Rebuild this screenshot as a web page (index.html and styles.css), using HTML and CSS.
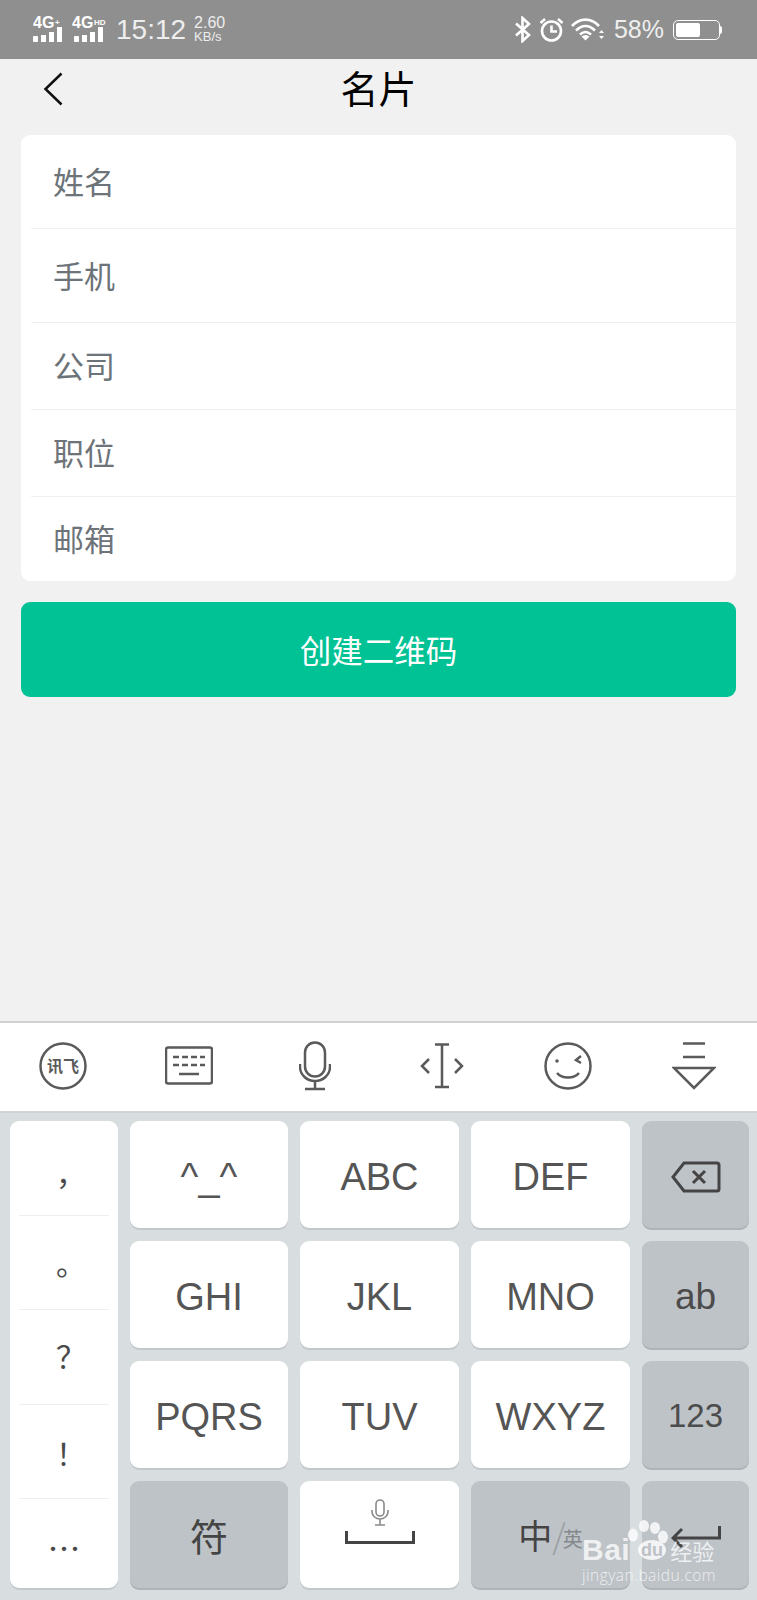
FILE: index.html
```html
<!DOCTYPE html>
<html>
  <head>
    <meta charset="utf-8">
    <title>名片</title>
    <link rel="stylesheet" href="styles.css">
  </head>
  <body>
    <div class="statusbar">
      <svg class="signal" width="34" height="36" viewBox="0 -4 34 36">
        <text x="0" y="12" class="net">4G</text>
        <text x="22" y="9" class="net-sup">+</text>
        <rect x="0" y="20" width="5" height="6" rx="1"/><rect x="8" y="19" width="5" height="7"/><rect x="16" y="16" width="5" height="10"/><rect x="24" y="11" width="5" height="15"/>
      </svg>
      <svg class="signal" width="38" height="36" viewBox="0 -4 38 36">
        <text x="0" y="12" class="net">4G</text>
        <text x="22" y="9" class="net-sup">HD</text>
        <rect x="2" y="20" width="5" height="6" rx="1"/><rect x="10" y="19" width="5" height="7"/><rect x="18" y="16" width="5" height="10"/><rect x="26" y="11" width="5" height="15"/>
      </svg>
      <div class="clock">15:12</div>
      <div class="speed"><div>2.60</div><div class="speed-unit">KB/s</div></div>
      <div class="status-right">
        <svg width="18" height="27" viewBox="0 0 18 27" class="status-line">
          <path d="M2 7.500 15 19 8.500 25V2L15 8 2 19.500"/>
        </svg>
        <svg width="25" height="25" viewBox="0 0 25 25" class="status-line">
          <circle cx="12.500" cy="14" r="9.500"/><path d="M12.500 8.500V14.500H18M1.500 6 6 2M23.500 6 19 2"/>
        </svg>
        <svg width="34" height="24" viewBox="0 0 34 24" class="status-line">
          <path d="M1 8C9-.5 20-.5 28 8M5 12.500C11 6.500 18 6.500 24 12.500M9 16.500C13 13 16 13 20 16.500"/>
          <path class="status-fill" d="M10.500 18.500C13 16.500 16 16.500 18.500 18.500L14.500 22.500ZM30.500 12 33 15H28ZM30.500 21 28 18H33Z"/>
        </svg>
        <div class="battery-text">58%</div>
        <div class="battery"><div class="battery-level" style="width: 58%"></div></div>
        <div class="battery-tip"></div>
      </div>
    </div>

    <div class="topbar">
      <div class="back">
        <svg width="20" height="34" viewBox="0 0 20 34"><path d="M18.500 1.500 2.500 17 18.500 32.500"/></svg>
      </div>
      <div class="title">名片</div>
      <div></div>
    </div>

    <div class="form">
      <div class="row row-tall">姓名</div>
      <div class="row row-tall">手机</div>
      <div class="row">公司</div>
      <div class="row">职位</div>
      <div class="row">邮箱</div>
    </div>
    <div class="create">创建二维码</div>

    <div class="keyboard">
      <div class="toolbar">
        <div class="tool">
          <svg width="50" height="50" viewBox="0 0 50 50">
            <circle cx="25" cy="25" r="22.500"/>
            <text x="25" y="31" class="tool-text">讯飞</text>
          </svg>
        </div>
        <div class="tool">
          <svg width="48" height="40" viewBox="0 0 48 40">
            <rect x="1" y="1.500" width="46" height="36" rx="2"/>
            <path class="dash" d="M8 11H40M8 19H40"/>
            <path d="M14 28H34"/>
          </svg>
        </div>
        <div class="tool">
          <svg width="32" height="50" viewBox="0 0 32 50">
            <rect x="6" y="1.500" width="20" height="34" rx="10"/>
            <path d="M1 23V26C1 34 8 40 16 40S31 34 31 26V23M16 40V48M6 48H26"/>
          </svg>
        </div>
        <div class="tool">
          <svg width="44" height="46" viewBox="0 0 44 46">
            <path d="M15 1.500H29M22 1.500V44M15 44H29M9 16 2 23 9 30M35 16 42 23 35 30"/>
          </svg>
        </div>
        <div class="tool">
          <svg width="50" height="50" viewBox="0 0 50 50">
            <circle cx="25" cy="25" r="22.500"/>
            <circle class="tool-fill" cx="14" cy="20" r="1.800"/>
            <path d="M38 15 33 19 38 22M14 32C19 38 31 38 36 32"/>
          </svg>
        </div>
        <div class="tool">
          <svg width="44" height="48" viewBox="0 0 44 48">
            <path d="M11 1.500H33M11 15H33M2 26H42L22 46Z"/>
          </svg>
        </div>
      </div>

      <div class="keys">
        <div class="punct">
          <div class="punct-item">，</div>
          <div class="punct-item">。</div>
          <div class="punct-item">？</div>
          <div class="punct-item">！</div>
          <div class="punct-item punct-last">…</div>
        </div>
        <div class="key">^_^</div>
        <div class="key">ABC</div>
        <div class="key">DEF</div>
        <div class="key key-dark">
          <svg width="50" height="32" viewBox="0 0 50 32" class="key-icon">
            <path d="M13 2H46C47.500 2 48 2.500 48 4V28C48 29.500 47.500 30 46 30H13L2 16ZM22 10 34 22M34 10 22 22"/>
          </svg>
        </div>
        <div class="key">GHI</div>
        <div class="key">JKL</div>
        <div class="key">MNO</div>
        <div class="key key-dark key-ab">ab</div>
        <div class="key">PQRS</div>
        <div class="key">TUV</div>
        <div class="key">WXYZ</div>
        <div class="key key-dark key-num">123</div>
        <div class="key key-dark key-cjk">符</div>
        <div class="key key-space">
          <svg width="20" height="27" viewBox="0 0 20 27" class="key-mic">
            <rect x="6" y="1" width="8" height="16" rx="4"/>
            <path d="M2 11V13C2 17 6 20 10 20S18 17 18 13V11M10 20V26M5 26H15"/>
          </svg>
          <svg width="70" height="14" viewBox="0 0 70 14" class="key-bar">
            <path d="M1.500 1V12.500H68.500V1"/>
          </svg>
        </div>
        <div class="key key-dark key-lang"><span class="lang-main">中</span><span class="lang-slash">/</span><span class="lang-sub">英</span></div>
        <div class="key key-dark">
          <svg width="50" height="24" viewBox="0 0 50 24" class="key-icon">
            <path d="M48.500 1V13H2M11 4 2 13 11 22"/>
          </svg>
        </div>
      </div>
    </div>

    <div class="watermark">
      <svg class="paw" width="42" height="40" viewBox="0 0 42 40">
        <ellipse cx="6" cy="15" rx="5" ry="6.500"/><ellipse cx="17" cy="6" rx="5" ry="6"/><ellipse cx="28" cy="8" rx="5" ry="6"/><ellipse cx="36" cy="17" rx="5" ry="6.500"/>
        <ellipse cx="25" cy="30" rx="14" ry="10"/>
        <text x="25" y="36" class="paw-du">du</text>
      </svg>
      <div class="wm-line"><span class="wm-brand">Bai</span><span class="wm-cn">经验</span></div>
      <div class="wm-url">jingyan.baidu.com</div>
    </div>
  </body>
</html>
```

FILE: styles.css
```css
html, body {
  margin: 0;
  padding: 0;
}
body {
  position: relative;
  width: 757px;
  height: 1600px;
  overflow: hidden;
  display: flex;
  flex-direction: column;
  background: #f1f1f1;
  font-family: "Noto Sans CJK SC", "Liberation Sans", sans-serif;
}

.statusbar {
  height: 59px;
  flex: none;
  display: flex;
  align-items: center;
  padding-left: 33px;
  background: #8f8f8f;
  color: #eee;
  font-family: "Liberation Sans", sans-serif;
}
.signal {
  margin-right: 5px;
  fill: #fff;
}
.net {
  font-size: 16px;
  font-weight: 700;
}
.net-sup {
  font-size: 8px;
  font-weight: 700;
}
.clock {
  margin-left: 1px;
  font-size: 28px;
}
.speed {
  margin-left: 8px;
  font-size: 16px;
  line-height: 14px;
}
.speed-unit {
  font-size: 13px;
}
.status-right {
  margin-left: auto;
  margin-right: 35px;
  display: flex;
  align-items: center;
}
.status-line {
  margin-right: 7px;
  fill: none;
  stroke: #fff;
  stroke-width: 2.600;
}
.status-fill {
  fill: #fff;
  stroke: none;
}
.battery-text {
  margin-left: 2px;
  margin-right: 9px;
  font-size: 25px;
}
.battery {
  width: 47px;
  height: 20px;
  box-sizing: border-box;
  padding: 2px;
  border: 1.500px solid #fff;
  border-radius: 5px;
}
.battery-level {
  height: 100%;
  background: #fff;
  border-radius: 2px;
}
.battery-tip {
  width: 2px;
  height: 8px;
  background: #fff;
  border-radius: 0 2px 2px 0;
}

.topbar {
  height: 76px;
  flex: none;
  display: grid;
  grid-template-columns: 1fr auto 1fr;
  align-items: center;
  padding-bottom: 18px;
  box-sizing: border-box;
  color: #000;
}
.back {
  padding-left: 43px;
  display: flex;
}
.back svg {
  fill: none;
  stroke: #111;
  stroke-width: 2.500;
}
.title {
  font-size: 38px;
  line-height: 56px;
  margin-bottom: 3px;
}

.form {
  flex: none;
  margin: 0 21px;
  padding-left: 10px;
  background: #fff;
  border-radius: 9px;
}
.row {
  height: 87px;
  box-sizing: border-box;
  display: flex;
  align-items: center;
  padding-left: 22px;
  padding-bottom: 3px;
  border-bottom: 1px solid #f0f0f0;
  font-size: 31px;
  color: #6c7379;
}
.row:last-child {
  border-bottom: 0;
  height: 84px;
}
.row-tall {
  height: 94px;
}

.create {
  flex: none;
  margin: 21px 21px 0;
  height: 95px;
  line-height: 94px;
  text-align: center;
  background: #00c295;
  border-radius: 9px;
  color: #fff;
  font-size: 31.500px;
}

.keyboard {
  margin-top: auto;
  height: 579px;
  flex: none;
  background: #d8dde0;
}
.toolbar {
  height: 92px;
  box-sizing: border-box;
  display: flex;
  padding-bottom: 3px;
  background: #fff;
  border-top: 2px solid #cfd1d3;
  border-bottom: 2px solid #cfd4d7;
}
.tool {
  flex: 1;
  display: flex;
  align-items: center;
  justify-content: center;
}
.tool svg {
  fill: none;
  stroke: #5a5a5a;
  stroke-width: 2.500;
}
.tool .tool-text {
  fill: #5a5a5a;
  stroke: none;
  font-size: 16px;
  font-weight: 700;
  text-anchor: middle;
}
.tool .tool-fill {
  fill: #5a5a5a;
  stroke: none;
}
.dash {
  stroke-dasharray: 6 3;
}

.keys {
  display: grid;
  grid-template-columns: 108px 158px 159px 159px 107px;
  grid-auto-rows: 107px;
  column-gap: 12px;
  row-gap: 13px;
  padding: 8px 0 0 10px;
}
.punct {
  grid-row: 1 / span 4;
  display: flex;
  flex-direction: column;
  background: #fff;
  border-radius: 9px;
  box-shadow: 0 2px 0 #c3c8cb;
}
.punct-item {
  height: 94.500px;
  margin: 0 9px;
  padding: 2px 0 0 14px;
  box-sizing: border-box;
  display: flex;
  align-items: center;
  justify-content: center;
  border-bottom: 1px solid #eceeef;
  font-size: 30px;
  color: #4a4a4a;
}
.punct-item:nth-child(1) {
  padding-top: 8px;
}
.punct-item:nth-child(2) {
  padding-top: 0;
}
.punct-item:nth-child(3) {
  padding-top: 0;
  padding-bottom: 4px;
}
.punct-last {
  flex: 1;
  padding-top: 6px;
  padding-left: 0;
  border-bottom: 0;
  font-size: 33px;
}
.key {
  display: flex;
  align-items: center;
  justify-content: center;
  padding-top: 5px;
  box-sizing: border-box;
  background: #fff;
  border-radius: 9px;
  box-shadow: 0 2px 0 #c3c8cb;
  font-family: "Liberation Sans", sans-serif;
  font-size: 38px;
  color: #555;
}
.key-dark {
  background: #bec3c8;
  box-shadow: 0 2px 0 #aeb3b8;
}
.key-ab {
  font-size: 37px;
  color: #4c4c4c;
}
.key-num {
  font-size: 33px;
  padding-top: 3px;
  color: #4c4c4c;
}
.key-cjk {
  padding-top: 0;
  font-family: "Noto Sans CJK SC", sans-serif;
  font-size: 38px;
  color: #444;
}
.key-icon {
  fill: none;
  stroke: #444;
  stroke-width: 3;
}
.key-space {
  flex-direction: column;
  justify-content: flex-start;
  padding-top: 18px;
}
.key-mic {
  fill: none;
  stroke: #8a8a8a;
  stroke-width: 1.600;
}
.key-bar {
  margin-top: 4px;
  fill: none;
  stroke: #444;
  stroke-width: 3;
}
.key-lang {
  padding: 0;
  font-family: "Noto Sans CJK SC", sans-serif;
  color: #444;
}
.lang-main {
  font-size: 34px;
}
.lang-slash {
  font-size: 34px;
  font-weight: 300;
  color: #9a9da0;
}
.lang-sub {
  margin-left: -3px;
  font-size: 20px;
  padding-top: 8px;
  color: #85888b;
}

.watermark {
  position: absolute;
  left: 582px;
  top: 1520px;
  width: 136px;
  color: rgba(255, 255, 255, 0.75);
  font-family: "Liberation Sans", sans-serif;
}
.paw {
  position: absolute;
  left: 45px;
  top: 0;
  fill: rgba(255, 255, 255, 0.8);
}
.paw .paw-du {
  fill: #bcc1c6;
  font-size: 18px;
  font-weight: 700;
  text-anchor: middle;
}
.wm-line {
  margin-top: 17px;
  display: flex;
  align-items: center;
  height: 26px;
}
.wm-brand {
  font-size: 30px;
  font-weight: 700;
  letter-spacing: 0.500px;
}
.wm-cn {
  margin-left: 40px;
  font-size: 22px;
  font-family: "Noto Sans CJK SC", sans-serif;
}
.wm-url {
  margin-top: 2px;
  font-family: "Open Sans", sans-serif;
  font-size: 15.500px;
  font-weight: 300;
  letter-spacing: 0.500px;
  line-height: 20px;
  white-space: nowrap;
}
```
